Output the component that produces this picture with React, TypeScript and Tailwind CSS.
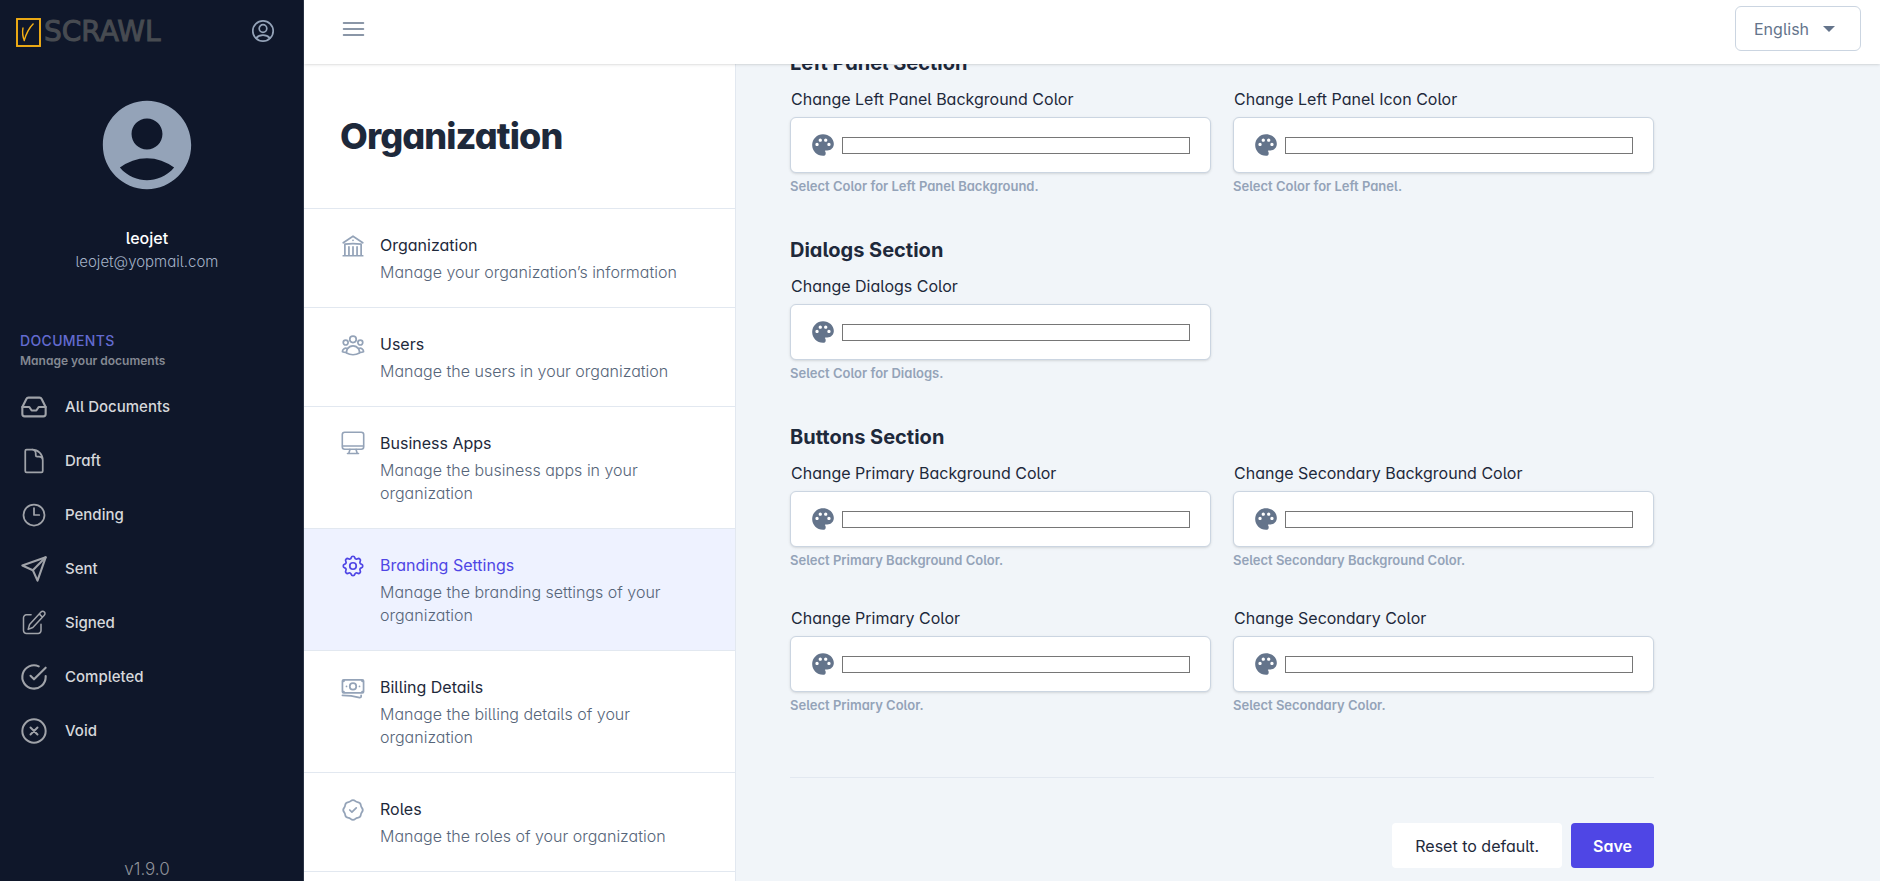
import React from "react";
import {
  HiOutlineBuildingLibrary,
  HiOutlineUserGroup,
  HiOutlineBanknotes,
} from "react-icons/hi2";
import { HiOutlineCog, HiOutlineBadgeCheck } from "react-icons/hi";
import { MdAccountCircle, MdPalette } from "react-icons/md";
import { FiInbox, FiSend, FiCheckCircle } from "react-icons/fi";

type IconProps = { className?: string };

const stroke = {
  fill: "none",
  stroke: "currentColor",
  strokeLinecap: "round" as const,
  strokeLinejoin: "round" as const,
  "aria-hidden": true,
};

function UserCircleIcon({ className }: IconProps) {
  return (
    <svg viewBox="0 0 24 24" className={className} {...stroke} strokeWidth={1.7}>
      <circle cx="12" cy="12" r="10.2" />
      <circle cx="12" cy="9.5" r="3.8" />
      <path d="M5 19.2c1.8-2 4.2-3 7-3s5.2 1 7 3" />
    </svg>
  );
}

function DesktopIcon({ className }: IconProps) {
  return (
    <svg viewBox="-1 0 26 26" className={className} {...stroke} strokeWidth={1.6}>
      <rect x="1.3" y="1.2" width="21.4" height="17" rx="2.4" />
      <path d="M1.6 15h20.8M9 18.400l-1.300 4M15 18.400l1.300 4M6.500 22.500h11" />
    </svg>
  );
}

function DocumentIcon({ className }: IconProps) {
  return (
    <svg viewBox="0 0 24 24" className={className} {...stroke} strokeWidth={1.5}>
      <path d="M19.5 14.25v-2.625a3.375 3.375 0 0 0-3.375-3.375h-1.5A1.125 1.125 0 0 1 13.5 7.125v-1.5a3.375 3.375 0 0 0-3.375-3.375H5.625c-.621 0-1.125.504-1.125 1.125v17.25c0 .621.504 1.125 1.125 1.125h12.75c.621 0 1.125-.504 1.125-1.125V11.25a9 9 0 0 0-9-9" />
    </svg>
  );
}

function ClockIcon({ className }: IconProps) {
  return (
    <svg viewBox="0 0 24 24" className={className} {...stroke} strokeWidth={1.5}>
      <circle cx="12" cy="12" r="9" />
      <path d="M12 6v6h4.5" />
    </svg>
  );
}

function SignIcon({ className }: IconProps) {
  return (
    <svg viewBox="0 0 24 24" className={className} {...stroke} strokeWidth={1.3}>
      <path d="M9.5 5H5.5A2.5 2.5 0 0 0 3 7.5v11A2.5 2.5 0 0 0 5.5 21h10a2.5 2.5 0 0 0 2.5-2.5V13" />
      <path d="M18 2.5a1.9 1.9 0 0 1 2.8 0 1.9 1.9 0 0 1 0 2.8L11 15.8 7 17.500l1.200-4.200L18 2.500zM16.500 4.200l2.800 2.800" />
    </svg>
  );
}

function VoidIcon({ className }: IconProps) {
  return (
    <svg viewBox="0 0 24 24" className={className} {...stroke} strokeWidth={1.7}>
      <circle cx="12" cy="12" r="10" />
      <path d="m9 9 6 6M15 9l-6 6" />
    </svg>
  );
}

const documentLinks = [
  { label: "All Documents", icon: <FiInbox className="size-7 stroke-[1.8]" /> },
  { label: "Draft", icon: <DocumentIcon className="size-7" /> },
  { label: "Pending", icon: <ClockIcon className="size-7" /> },
  { label: "Sent", icon: <FiSend className="size-7 stroke-[1.8]" /> },
  { label: "Signed", icon: <SignIcon className="size-7" /> },
  { label: "Completed", icon: <FiCheckCircle className="size-7 stroke-[1.8]" /> },
  { label: "Void", icon: <VoidIcon className="size-7" /> },
];

const settings = [
  {
    title: "Organization",
    text: "Manage your organization’s information",
    icon: <HiOutlineBuildingLibrary className="size-[26px] stroke-[1.6]" />,
  },
  {
    title: "Users",
    text: "Manage the users in your organization",
    icon: <HiOutlineUserGroup className="size-[26px] stroke-[1.6]" />,
  },
  {
    title: "Business Apps",
    text: "Manage the business apps in your organization",
    icon: <DesktopIcon className="size-[26px]" />,
  },
  {
    title: "Branding Settings",
    text: "Manage the branding settings of your organization",
    icon: <HiOutlineCog className="size-[26px] stroke-[1.6]" />,
    active: true,
  },
  {
    title: "Billing Details",
    text: "Manage the billing details of your organization",
    icon: <HiOutlineBanknotes className="size-[26px] stroke-[1.6]" />,
  },
  {
    title: "Roles",
    text: "Manage the roles of your organization",
    icon: <HiOutlineBadgeCheck className="size-[26px] stroke-[1.6]" />,
  },
];

const sections = [
  {
    title: "Left Panel Section",
    fields: [
      { id: "left-bg", label: "Change Left Panel Background Color", hint: "Select Color for Left Panel Background." },
      { id: "left-icon", label: "Change Left Panel Icon Color", hint: "Select Color for Left Panel." },
    ],
  },
  {
    title: "Dialogs Section",
    fields: [{ id: "dialogs", label: "Change Dialogs Color", hint: "Select Color for Dialogs." }],
  },
  {
    title: "Buttons Section",
    fields: [
      { id: "primary-bg", label: "Change Primary Background Color", hint: "Select Primary Background Color." },
      { id: "secondary-bg", label: "Change Secondary Background Color", hint: "Select Secondary Background Color." },
      { id: "primary", label: "Change Primary Color", hint: "Select Primary Color." },
      { id: "secondary", label: "Change Secondary Color", hint: "Select Secondary Color." },
    ],
  },
];

function ColorField({ id, label, hint }: { id: string; label: string; hint: string }) {
  return (
    <div>
      <label htmlFor={id} className="block px-px text-base leading-6 text-[#1e293b]">
        {label}
      </label>
      <div className="mt-1.5 flex h-14 items-center gap-1.5 rounded-md border border-[#cbd5e1] bg-white pr-5 pl-[19px] shadow-sm">
        <MdPalette className="size-[26px] shrink-0 text-[#64748b]" />
        <input
          id={id}
          type="color"
          defaultValue="#ffffff"
          className="h-[17px] min-w-0 flex-1 appearance-none border border-[#767676] bg-white [&::-webkit-color-swatch-wrapper]:p-0 [&::-webkit-color-swatch]:border-0"
        />
      </div>
      <p className="mt-[3px] text-[13px] leading-5 font-semibold text-[#94a3b8]">{hint}</p>
    </div>
  );
}

function Sidebar() {
  return (
    <aside className="flex w-[304px] shrink-0 flex-col border-r border-[#2b3446] bg-[#0f172a]">
      <div className="flex h-16 items-center justify-between pr-7 pl-4">
        <a href="#" className="flex items-center gap-[3px]" aria-label="Scrawl">
          <svg viewBox="0 0 25 29" className="h-[29px] w-[25px]" fill="none" aria-hidden="true">
            <rect x="1" y="1" width="23" height="27" stroke="#f5b014" strokeWidth="1.9" />
            <path d="M7 9.5C6.3 13.5 6.5 18.5 8.5 23M8 23c2-7 5-13 9.5-17.5" stroke="#f5b014" strokeWidth="1.4" />
          </svg>
          <span className="font-['DejaVu_Sans',sans-serif] text-[28px] leading-8 text-[#474b51] [-webkit-text-stroke:1px_#474b51]">
            SCRAWL
          </span>
        </a>
        <button type="button" aria-label="Account" className="mb-0.5 text-[#94a3b8]">
          <UserCircleIcon className="size-6" />
        </button>
      </div>
      <div className="flex flex-col items-center pt-7 pr-[9px]">
        <MdAccountCircle className="size-[106px] text-[#94a3b8]" />
        <p className="mt-7 text-base leading-6 font-medium text-white">leojet</p>
        <p className="text-[15px] leading-6 font-light text-[#a3b1c6]">leojet@yopmail.com</p>
      </div>
      <nav aria-label="Documents" className="pt-[57px]">
        <h2 className="px-5 text-sm leading-5 font-medium tracking-wide text-[#636bd0]">DOCUMENTS</h2>
        <p className="px-5 text-xs leading-5 font-semibold text-[#848993]">Manage your documents</p>
        <ul className="pt-[9px]">
          {documentLinks.map((item) => (
            <li key={item.label}>
              <a href="#" className="flex h-[54px] items-center gap-[17px] px-5 text-[15px] font-medium text-[#d6d8db]">
                <span className="text-[#a0a3a9]">{item.icon}</span>
                {item.label}
              </a>
            </li>
          ))}
        </ul>
      </nav>
      <p className="mt-auto pr-[9px] text-center text-[17px] leading-6 font-light text-[#8f939a]">v1.9.0</p>
    </aside>
  );
}

export default function App() {
  return (
    <div className="flex h-screen overflow-hidden bg-[#f1f5f9] font-['Inter',sans-serif] text-[#1e293b] [font-feature-settings:'cv05','cv11']">
      <Sidebar />
      <div className="flex min-w-0 flex-1 flex-col">
        <header className="z-10 flex h-16 shrink-0 items-center justify-between bg-white pr-[19px] pl-[37px] shadow">
          <button type="button" aria-label="Toggle menu" className="mb-[7px] text-[#64748b]">
            <svg viewBox="0 0 24 24" className="size-6" {...stroke} strokeWidth={1.5}>
              <path d="M2.5 6h20M2.5 12h20M2.5 18h20" />
            </svg>
          </button>
          <div className="relative mb-[7px]">
            <select
              aria-label="Language"
              className="block h-[45px] w-[126px] appearance-none rounded-md border border-[#cbd5e1] bg-white pl-[18px] text-base text-[#64748b]"
            >
              <option>English</option>
            </select>
            <svg viewBox="0 0 12 6" className="pointer-events-none absolute top-5 right-[26px] h-1.5 w-3 text-[#64748b]" fill="currentColor" aria-hidden="true">
              <path d="M0 0h12L6 6z" />
            </svg>
          </div>
        </header>

        <div className="flex min-h-0 flex-1">
          <section className="w-[432px] shrink-0 overflow-hidden border-r border-[#e2e8f0] bg-white">
            <h1 className="px-9 py-[52px] text-4xl leading-10 font-extrabold tracking-tight">
              Organization
            </h1>
            <nav aria-label="Settings" className="border-t border-[#e2e8f0]">
              {settings.map((item) => (
                <a
                  key={item.title}
                  href="#"
                  className={
                    item.active
                      ? "flex gap-3.5 border-b border-[#e2e8f0] bg-[#eef2ff] px-9 pt-6 pb-[23px] text-[#4f46e5]"
                      : "flex gap-3.5 border-b border-[#e2e8f0] px-9 pt-6 pb-[23px] text-[#94a3b8]"
                  }
                >
                  <span className="shrink-0">{item.icon}</span>
                  <span className="block">
                    <span className={item.active ? "block text-base leading-6" : "block text-base leading-6 text-[#1e293b]"}>
                      {item.title}
                    </span>
                    <span className="mt-1 block text-base leading-[23px] font-light text-[#566579]">{item.text}</span>
                  </span>
                </a>
              ))}
            </nav>
          </section>

          <main className="min-w-0 flex-1 overflow-hidden px-[54px]">
            <form className="-mt-[13px] max-w-[864px]" onSubmit={(e) => e.preventDefault()}>
              <div className="flex flex-col gap-[42px]">
                {sections.map((section) => (
                  <section key={section.title}>
                    <h2 className="text-xl leading-6 font-bold">{section.title}</h2>
                    <div className="mt-3 grid grid-cols-2 gap-x-[22px] gap-y-9">
                      {section.fields.map((field) => (
                        <ColorField key={field.id} {...field} />
                      ))}
                    </div>
                  </section>
                ))}
              </div>
              <div className="mt-[62px] flex justify-end gap-[9px] border-t border-[#e2e8f0] pt-[45px]">
                <button type="reset" className="h-[45px] rounded bg-white px-[23px] text-base text-[#1e293b]">
                  Reset to default.
                </button>
                <button type="submit" className="h-[45px] rounded bg-[#4f46e5] px-[22px] text-base font-semibold text-white">
                  Save
                </button>
              </div>
            </form>
          </main>
        </div>
      </div>
    </div>
  );
}
